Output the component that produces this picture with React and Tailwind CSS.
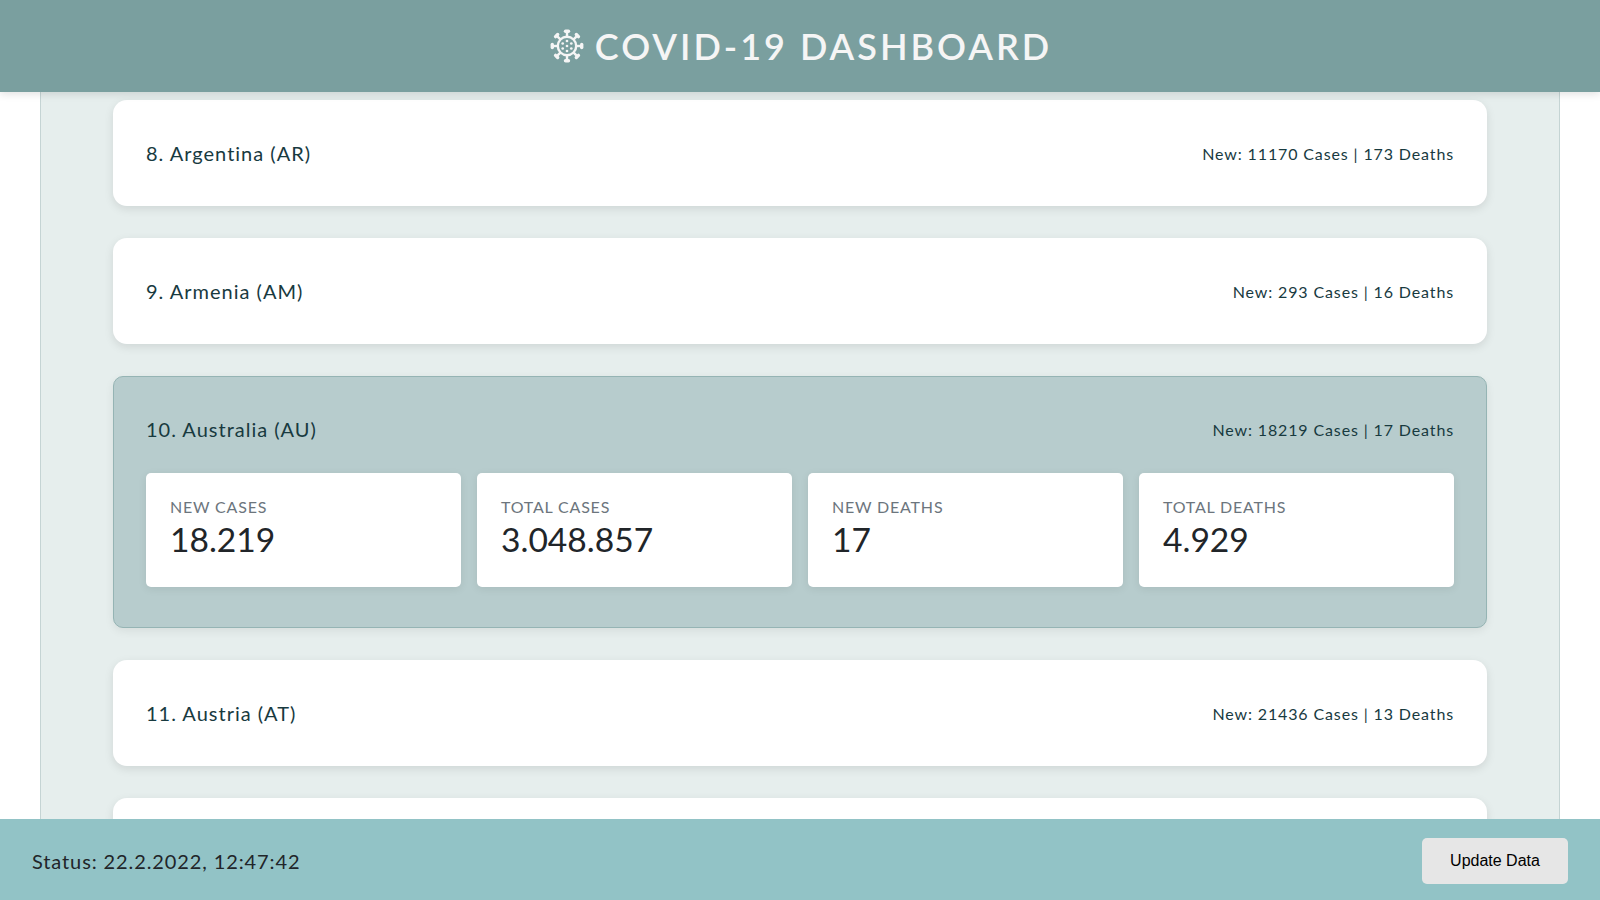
const countries = [
  { label: "8. Argentina (AR)", summary: "New: 11170 Cases | 173 Deaths" },
  { label: "9. Armenia (AM)", summary: "New: 293 Cases | 16 Deaths" },
  {
    label: "10. Australia (AU)",
    summary: "New: 18219 Cases | 17 Deaths",
    stats: [
      { title: "NEW CASES", value: "18.219" },
      { title: "TOTAL CASES", value: "3.048.857" },
      { title: "NEW DEATHS", value: "17" },
      { title: "TOTAL DEATHS", value: "4.929" }
    ]
  },
  { label: "11. Austria (AT)", summary: "New: 21436 Cases | 13 Deaths" },
  // next row is cut off by the footer, its text never shows
  { label: "", summary: "" }
];

const spikes = [0, 45, 90, 135, 180, 225, 270, 315];
const dots = [
  [17, 17], [17, 12], [21.3, 14.5], [21.3, 19.5], [17, 22], [12.7, 19.5], [12.7, 14.5]
];

function VirusIcon() {
  return (
    <svg width="34" height="34" viewBox="0 0 34 34" className="shrink-0" fill="#f5f5f5">
      <circle cx="17" cy="17" r="9.2" fill="none" stroke="#f5f5f5" strokeWidth="2.4" />
      {spikes.map((angle) => (
        <g key={angle} transform={`rotate(${angle} 17 17)`}>
          <rect x="15.8" y="3" width="2.4" height="5" />
          <rect x="13.8" y="0.6" width="6.4" height="3.4" rx="1.7" />
        </g>
      ))}
      {dots.map(([x, y]) => (
        <circle key={`${x}-${y}`} cx={x} cy={y} r="1.35" />
      ))}
    </svg>
  );
}

function StatCard({ title, value }) {
  return (
    <div className="h-[114px] rounded-[5px] bg-white px-6 pt-[23px] shadow-[0_2px_8px_rgba(0,0,0,0.08)]">
      <p className="text-[16px] leading-[22px] tracking-[0.05em] text-[#6c757d]">{title}</p>
      <p className="text-[33.6px] leading-[42px] text-[#212529]">{value}</p>
    </div>
  );
}

function CountryCard({ label, summary, stats }) {
  const open = Boolean(stats);
  return (
    <div
      className={
        open
          ? "mb-8 rounded-[10px] border border-[#95b4b4] bg-[#b7cccd] px-8 pb-10 pt-[37px] shadow-[0_3px_10px_rgba(0,0,0,0.07)]"
          : "mb-8 h-[106px] rounded-[14px] bg-white px-[33px] shadow-[0_3px_10px_rgba(0,0,0,0.1)]"
      }
    >
      <div className={open ? "flex items-center justify-between" : "flex h-full items-center justify-between"}>
        <span className="text-[20px] leading-[30px] tracking-[0.05em] text-[#183a3f]">{label}</span>
        <span className="pt-0.5 text-[16px] leading-6 tracking-[0.87px] text-[#183a3f]">{summary}</span>
      </div>
      {open ? (
        <div className="mt-[29px] grid grid-cols-4 gap-4">
          {stats.map((stat) => (
            <StatCard key={stat.title} {...stat} />
          ))}
        </div>
      ) : null}
    </div>
  );
}

export default function App() {
  return (
    <div className="flex h-screen flex-col overflow-hidden bg-white font-['Lato',sans-serif]">
      <header className="relative z-10 flex h-[92px] shrink-0 items-center justify-center gap-[11px] bg-[#7a9f9f] pl-[2px] shadow-[0_2px_8px_rgba(0,0,0,0.12)]">
        <VirusIcon />
        <h1 className="text-[36px] font-semibold tracking-[3px] text-[#f5f5f5]">COVID-19 DASHBOARD</h1>
      </header>
      <main className="mx-10 min-h-0 flex-1 overflow-hidden border-x border-[#c5d4d4] bg-[#e6eeed] px-[72px] pt-2">
        {countries.map((country, index) => (
          <CountryCard key={index} {...country} />
        ))}
      </main>
      <footer className="relative z-10 flex h-[81px] shrink-0 items-center justify-between bg-[#92c3c6] pl-8 pr-8 pt-[3px]">
        <span className="text-[20px] tracking-[0.89px] text-[#212529]">Status: 22.2.2022, 12:47:42</span>
        <button type="button" className="h-[46px] w-[146px] rounded-[5px] bg-[#e6e6e6] font-['Liberation_Sans',sans-serif] text-[16px] text-black">
          Update Data
        </button>
      </footer>
    </div>
  );
}
